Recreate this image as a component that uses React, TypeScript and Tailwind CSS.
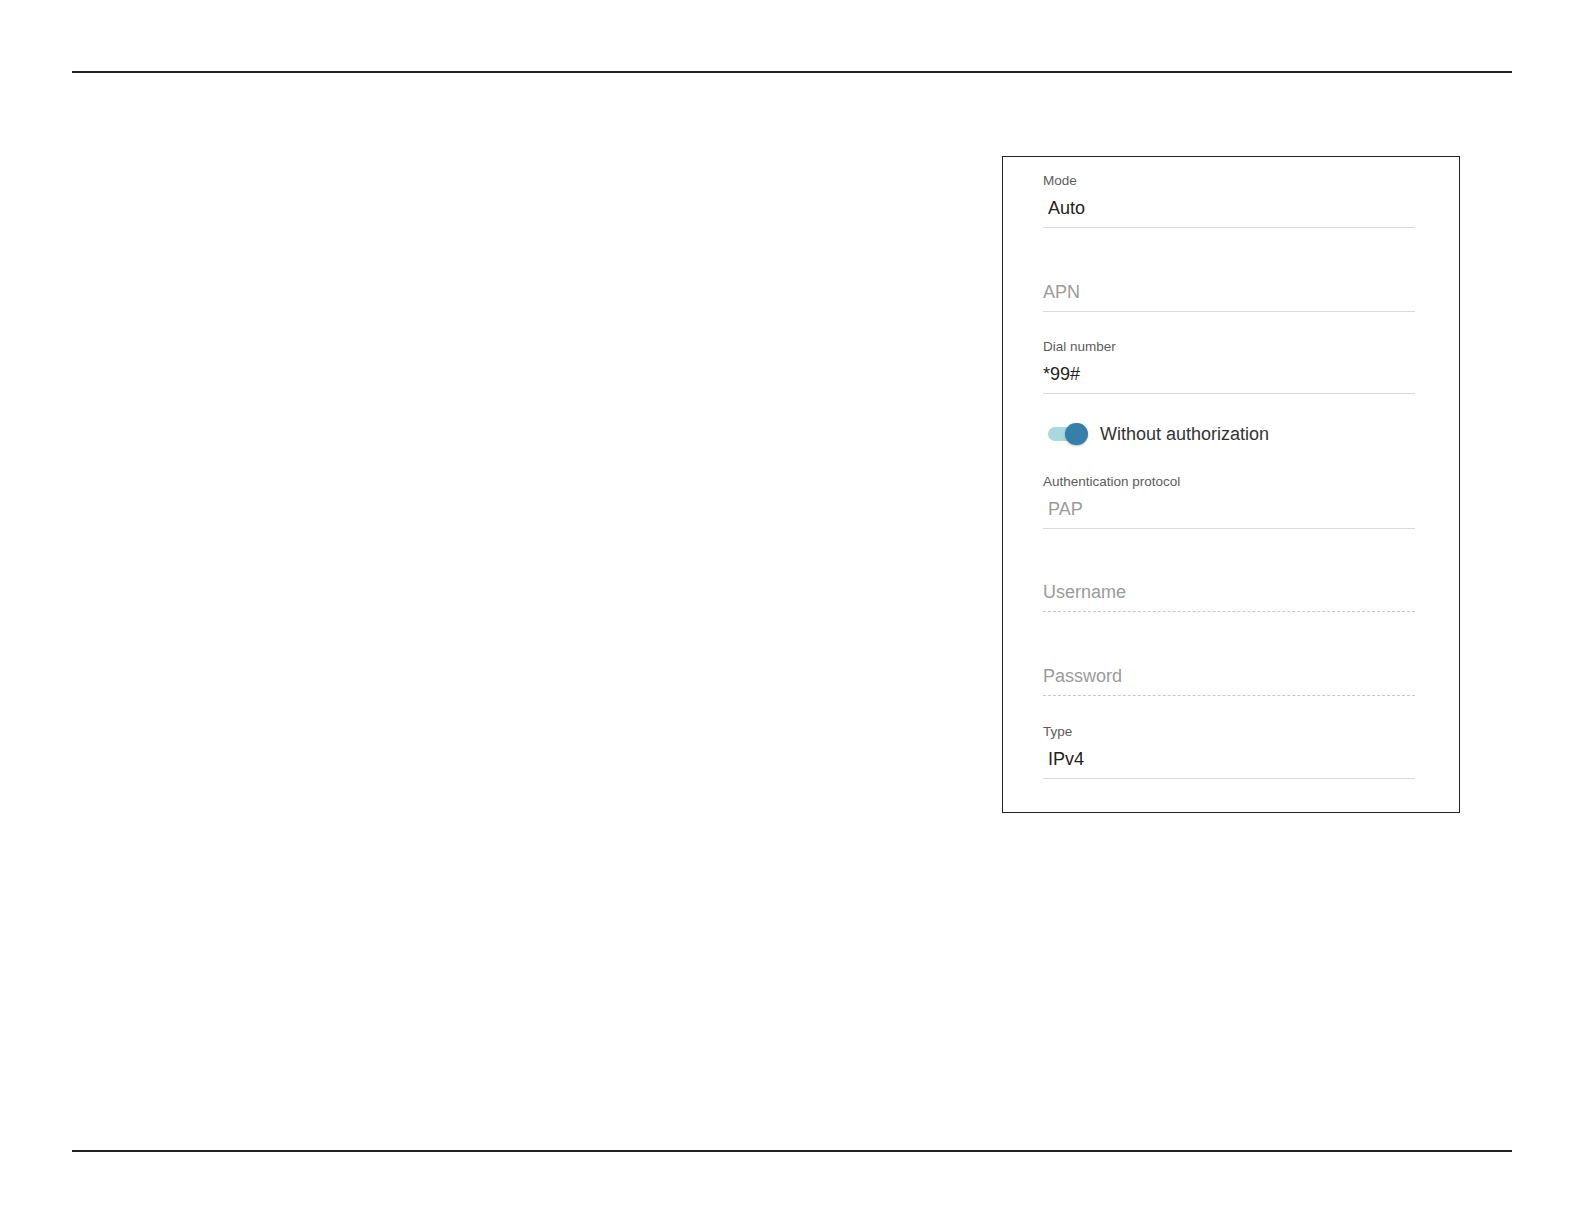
import React from 'react';

interface FieldProps {
  label?: string;
  value: string;
  muted?: boolean;
  select?: boolean;
  dashed?: boolean;
  className?: string;
}

/**
 * Underlined form field: small label on top, value, bottom rule
 */
const Field: React.FC<FieldProps> = ({ label, value, muted, select, dashed, className = '' }) => (
  <div className={className}>
    <div className="h-[16px] text-[13.5px] leading-[14px] text-[#5c5c5c]">{label}</div>
    <div
      className={`mt-[6px] h-[24px] text-[18px] leading-[24px] ${select ? 'pl-[5px]' : ''} ${
        muted ? 'text-[#9b9b9b]' : 'text-[#222222]'
      }`}
    >
      {value}
    </div>
    <div
      className={`mt-[7px] border-b ${
        dashed ? 'border-dashed border-[#c9c9c9]' : 'border-solid border-[#d9d9d9]'
      }`}
    />
  </div>
);

const Toggle: React.FC<{ label: string }> = ({ label }) => (
  <div className="mt-[28px] flex h-[24px] items-center pl-[5px]">
    <div className="relative h-[22px] w-[40px]">
      <div className="absolute left-0 top-[4px] h-[14px] w-[34px] rounded-full bg-[#a9d8de]" />
      <div className="absolute left-[17px] top-0 h-[22px] w-[23px] rounded-full bg-[#3480aa] shadow-[0_1px_2px_rgba(0,0,0,0.25)]" />
    </div>
    <span className="ml-[12px] text-[18px] leading-[24px] text-[#333333]">{label}</span>
  </div>
);

const App: React.FC = () => {
  return (
    <div className="h-[1224px] w-[1584px] bg-white font-['Liberation_Sans',Arial,sans-serif]">
      <div className="px-[72px] pt-[71px]">
        {/* Top rule */}
        <div className="h-[2px] bg-[#222222]" />

        <div className="flex h-[1077px] justify-end pr-[52px] pt-[83px]">
          {/* Connection settings card */}
          <div className="h-fit w-[458px] border border-[#222222] pb-[33px] pl-[40px] pr-[44px] pt-[17px]">
            <Field label="Mode" value="Auto" select />
            <Field value="APN" muted className="mt-[30px]" />
            <Field label="Dial number" value="*99#" className="mt-[28px]" />
            <Toggle label="Without authorization" />
            <Field label="Authentication protocol" value="PAP" muted select className="mt-[29px]" />
            <Field value="Username" muted dashed className="mt-[29px]" />
            <Field value="Password" muted dashed className="mt-[30px]" />
            <Field label="Type" value="IPv4" select className="mt-[29px]" />
          </div>
        </div>

        {/* Bottom rule */}
        <div className="h-[2px] bg-[#222222]" />
      </div>
    </div>
  );
};

export default App;
